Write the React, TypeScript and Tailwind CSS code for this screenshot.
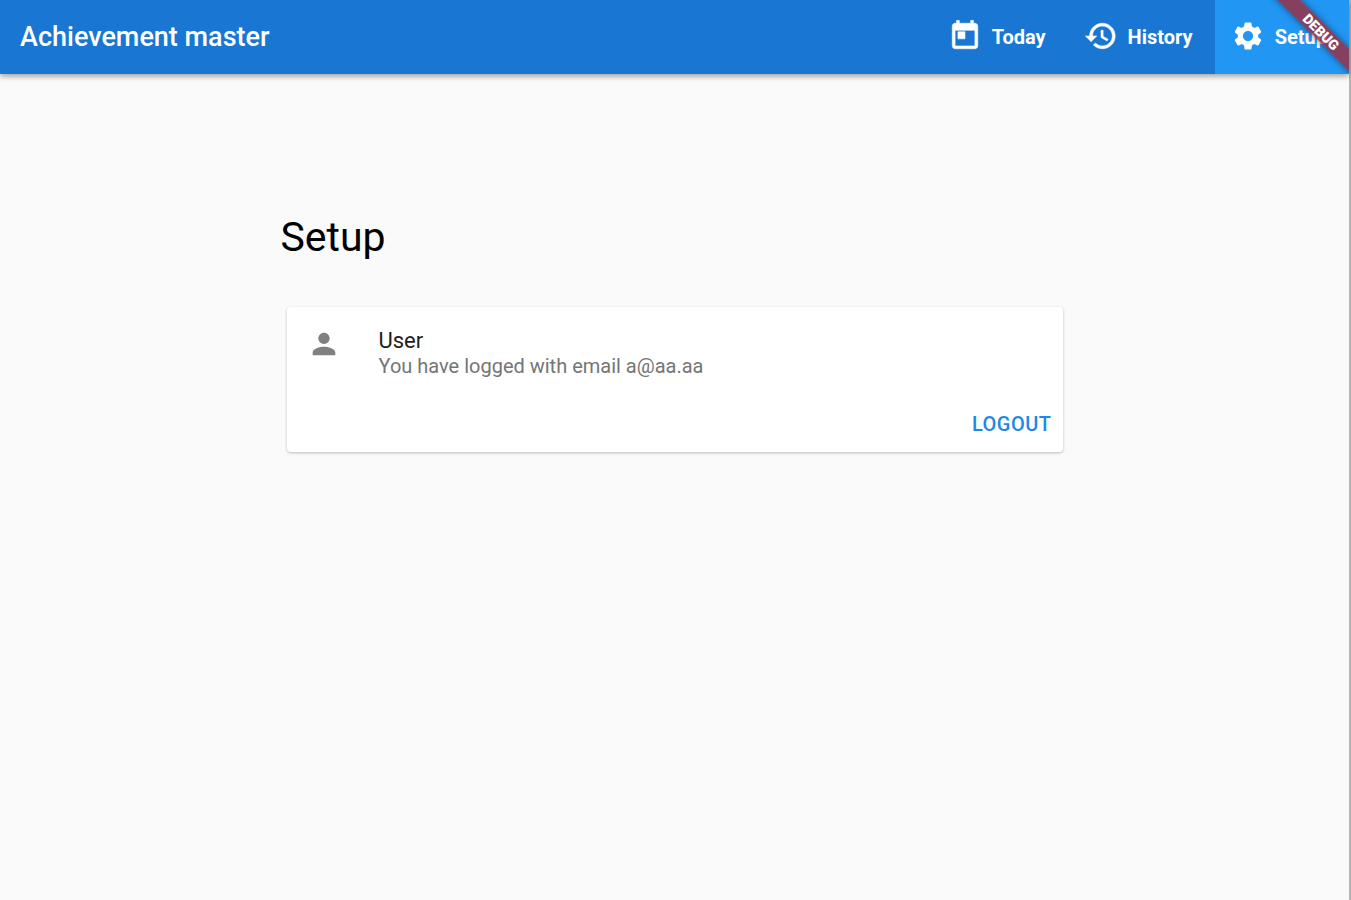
import type { ComponentType, SVGProps } from 'react';
import { MdPerson, MdSettings } from 'react-icons/md';

interface NavItem {
  label: string;
  icon: ComponentType<SVGProps<SVGSVGElement>>;
  active?: boolean;
}

function TodayIcon(props: SVGProps<SVGSVGElement>) {
  return (
    <svg viewBox="0 0 24 24" fill="currentColor" stroke="currentColor" strokeWidth={0.4} {...props}>
      <path d="M19 3h-1V1h-2v2H8V1H6v2H5c-1.11 0-1.99.9-1.99 2L3 19c0 1.1.89 2 2 2h14c1.1 0 2-.9 2-2V5c0-1.1-.9-2-2-2zm0 16H5V8h14v11zM7 9h5v5H7z" />
    </svg>
  );
}

function HistoryIcon(props: SVGProps<SVGSVGElement>) {
  return (
    <svg viewBox="0 0 24 24" fill="currentColor" stroke="currentColor" strokeWidth={0.4} {...props}>
      <path d="M13 3c-4.97 0-9 4.03-9 9H1l3.89 3.89.07.14L9 12H6c0-3.87 3.13-7 7-7s7 3.13 7 7-3.13 7-7 7c-1.93 0-3.68-.79-4.94-2.06l-1.42 1.42C8.27 19.99 10.51 21 13 21c4.97 0 9-4.03 9-9s-4.03-9-9-9zm-1 5v5l4.28 2.54.72-1.21-3.5-2.08V8H12z" />
    </svg>
  );
}

const navItems: NavItem[] = [
  { label: 'Today', icon: TodayIcon },
  { label: 'History', icon: HistoryIcon },
  { label: 'Setup', icon: MdSettings, active: true },
];

// Corner ribbon, lies over the last tab
function DebugBanner() {
  return (
    <div className="pointer-events-none absolute top-0 right-0 h-[74px] w-20 overflow-hidden">
      <div className="absolute top-6 right-[-36px] flex h-4 w-32 rotate-45 items-center justify-center bg-[#a02a3a]/80 text-sm leading-none font-black text-white shadow-[0_0_6px_rgba(0,0,0,0.5)]">
        DEBUG
      </div>
    </div>
  );
}

function AppBar() {
  return (
    <header className="relative flex h-[74px] items-stretch justify-between bg-[#1976d2] text-white shadow-[0_2px_6px_rgba(0,0,0,0.4)]">
      <div className="flex items-center pl-5 text-[27px] font-medium">Achievement master</div>
      <nav className="flex">
        {navItems.map(({ label, icon: Icon, active }) => (
          <a
            key={label}
            href={`#${label.toLowerCase()}`}
            aria-current={active ? 'page' : undefined}
            className={`flex items-center gap-2.5 pr-[22px] pl-4 text-xl font-bold ${active ? 'bg-[#2196f3]' : ''}`}
          >
            <Icon className="mb-0.5 size-[34px]" aria-hidden="true" />
            {label}
          </a>
        ))}
      </nav>
      <DebugBanner />
    </header>
  );
}

function UserCard() {
  return (
    <section className="mx-1.5 mt-[46px] rounded-sm bg-white shadow-[0_1px_3px_rgba(0,0,0,0.25)]">
      <div className="flex items-start gap-[38px] px-5 pt-5">
        <MdPerson className="size-[34px] text-[#808080]" aria-hidden="true" />
        <div>
          <h2 className="text-[22px] leading-7 text-[#212121]">User</h2>
          <p className="text-xl leading-[22px] text-[#757575]">You have logged with email a@aa.aa</p>
        </div>
      </div>
      <div className="flex justify-end px-[11px] pt-[26px] pb-2">
        <button type="button" className="h-[41px] text-xl font-medium tracking-wide text-[#1e88e5]">
          LOGOUT
        </button>
      </div>
    </section>
  );
}

export default function App() {
  return (
    <div className="min-h-screen border-r-2 border-[#b5b5b5] bg-[#fafafa] font-['Roboto',sans-serif]">
      <AppBar />
      <main className="mx-auto w-full max-w-[788px] pt-[139px]">
        <h1 className="text-[41px] leading-[48px] text-black">Setup</h1>
        <UserCard />
      </main>
    </div>
  );
}
